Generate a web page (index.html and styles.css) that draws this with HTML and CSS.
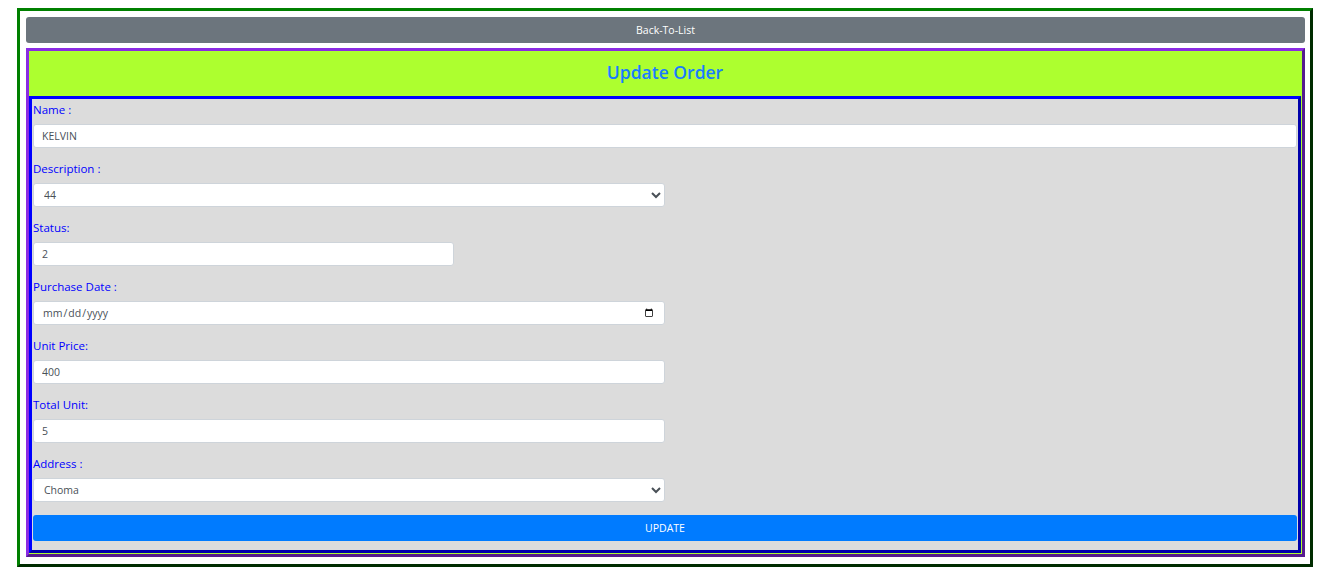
FILE: index.html
```html
<!DOCTYPE html>
<html lang="en">
<head>
<meta charset="utf-8">
<title>Update Order</title>
<link rel="stylesheet" href="styles.css">
</head>
<body>
<div class="outer">
  <button class="btn-back" type="button">Back-To-List</button>
  <div class="panel">
    <h4 class="panel-title">Update Order</h4>
    <form class="form-box">
      <div class="group">
        <label class="lbl">Name :</label>
        <input class="ctl full" type="text" value="KELVIN">
      </div>
      <div class="group">
        <label class="lbl">Description :</label>
        <select class="ctl half"><option>44</option></select>
      </div>
      <div class="group">
        <label class="lbl">Status:</label>
        <input class="ctl third" type="text" value="2">
      </div>
      <div class="group">
        <label class="lbl">Purchase Date :</label>
        <input class="ctl half" type="date">
      </div>
      <div class="group">
        <label class="lbl">Unit Price:</label>
        <input class="ctl half" type="text" value="400">
      </div>
      <div class="group">
        <label class="lbl">Total Unit:</label>
        <input class="ctl half" type="text" value="5">
      </div>
      <div class="group last">
        <label class="lbl">Address :</label>
        <select class="ctl half"><option>Choma</option></select>
      </div>
      <button class="btn-update" type="button">UPDATE</button>
    </form>
  </div>
</div>
</body>
</html>
```

FILE: styles.css
```css
* { box-sizing: border-box; }
html, body { background: #ffffff; }
body {
  margin: 8px 0 0 0;
  font-family: "Open Sans", "Noto Sans", Arial, sans-serif;
}
.outer {
  margin-left: 17px;
  width: 1296px;
  height: 559px;
  border: 3px outset #008000;
  padding: 6px 5px 6px 6px;
  display: flex;
  flex-direction: column;
}
.btn-back {
  height: 26px;
  width: 100%;
  background: #6c757d;
  color: #ffffff;
  border: none;
  border-radius: 3px;
  font-family: inherit;
  font-size: 10.5px;
  font-weight: 500;
  padding: 0;
  margin: 0 0 5px 0;
}
.panel {
  border: 3px outset #8a2be2;
  background: #adff2f;
  display: flex;
  flex-direction: column;
  padding: 0 1px 0 0;
}
.panel-title {
  margin: 0;
  height: 45px;
  padding-bottom: 4px;
  display: flex;
  align-items: center;
  justify-content: center;
  color: #1a7cff;
  font-weight: 600;
  font-size: 17.5px;
}
.form-box {
  margin: 0 0 1px 0;
  border: 3px outset #0000ff;
  background: #dcdcdc;
  padding: 2px 1px 9px 1px;
  display: flex;
  flex-direction: column;
}
.group {
  display: flex;
  flex-direction: column;
  margin-bottom: 12px;
}
.group.last { margin-bottom: 13px; }
.lbl {
  color: #0000ff;
  font-size: 11.5px;
  line-height: 18px;
  margin-bottom: 5px;
}
.ctl {
  height: 24px;
  border: 1px solid #ced4da;
  border-radius: 3px;
  background: #ffffff;
  color: #495057;
  font-family: inherit;
  font-size: 10.5px;
  padding: 0 8px;
  margin: 0;
}
select.ctl { padding: 0 6px; }
.full { width: 100%; }
.half { width: 632px; }
.third { width: 421px; }
.btn-update {
  height: 26px;
  width: 100%;
  background: #007bff;
  color: #ffffff;
  border: none;
  border-radius: 3px;
  font-family: inherit;
  font-size: 10.5px;
  padding: 0;
}
```
